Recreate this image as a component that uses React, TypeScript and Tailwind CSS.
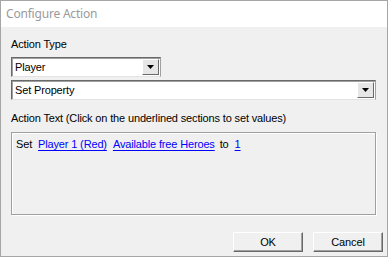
import React from "react";

const font = { fontFamily: '"Liberation Sans", Arial, sans-serif' };

const Arrow = () => (
  <svg width="7" height="4" viewBox="0 0 7 4" className="block">
    <path d="M0 0h7L3.5 4z" fill="#000" />
  </svg>
);

const Combo = ({ value, width }: { value: string; width: string }) => (
  <div
    className={`${width} h-[20px] flex bg-white border border-t-[#696969] border-l-[#696969] border-r-[#a0a0a0] border-b-[#e3e3e3] shadow-[inset_1px_1px_0_#a0a0a0]`}
  >
    <div className="flex-1 flex items-center pl-[3px] text-[11px] text-black leading-none">
      {value}
    </div>
    <div className="w-[17px] my-[1px] mr-[1px] flex items-center justify-center bg-[#e6e6e6] border border-t-white border-l-white border-r-[#696969] border-b-[#696969]">
      <Arrow />
    </div>
  </div>
);

const Btn = ({ label }: { label: string }) => (
  <button className="w-[70px] h-[20px] flex items-center justify-center text-[11px] text-black bg-[#f0f0f0] border border-t-white border-l-white border-r-[#696969] border-b-[#696969] shadow-[inset_-1px_-1px_0_#a0a0a0]">
    {label}
  </button>
);

const Link = ({ children }: { children: React.ReactNode }) => (
  <span className="text-[#0000ff] underline underline-offset-[2px]">{children}</span>
);

export default function App() {
  return (
    <div
      style={font}
      className="w-[388px] h-[257px] flex flex-col border border-[#a6a6a6] bg-[#f0f0f0]"
    >
      <div className="h-[26px] bg-white flex items-center pl-[5px] shrink-0">
        <span
          className="text-[12px] text-[#9a9a9a] tracking-[-0.2px]"
          style={{ fontFamily: '"Segoe UI", "Noto Sans", sans-serif' }}
        >
          Configure Action
        </span>
      </div>
      <div className="flex-1 flex flex-col px-[10px] text-[11px] leading-[13px] tracking-[-0.15px] text-black">
        <div className="mt-[11px]">Action Type</div>
        <div className="mt-[6px]">
          <Combo value="Player" width="w-[150px]" />
        </div>
        <div className="mt-[3px]">
          <Combo value="Set Property" width="w-[365px]" />
        </div>
        <div className="mt-[12px]">
          Action Text (Click on the underlined sections to set values)
        </div>
        <div className="mt-[7px] w-[365px] h-[83px] border border-[#a0a0a0] shadow-[1px_1px_0_#fff,inset_1px_1px_0_#fff] pt-[5px] pl-[4px]">
          <span>Set</span>
          <span className="ml-[6px]">
            <Link>Player 1 (Red)</Link>
          </span>
          <span className="ml-[6px]">
            <Link>Available free Heroes</Link>
          </span>
          <span className="ml-[5px]">to</span>
          <span className="ml-[6px]">
            <Link>1</Link>
          </span>
        </div>
        <div className="mt-auto mb-[4px] flex justify-end gap-[10px] -mr-[6px]">
          <Btn label="OK" />
          <Btn label="Cancel" />
        </div>
      </div>
    </div>
  );
}
